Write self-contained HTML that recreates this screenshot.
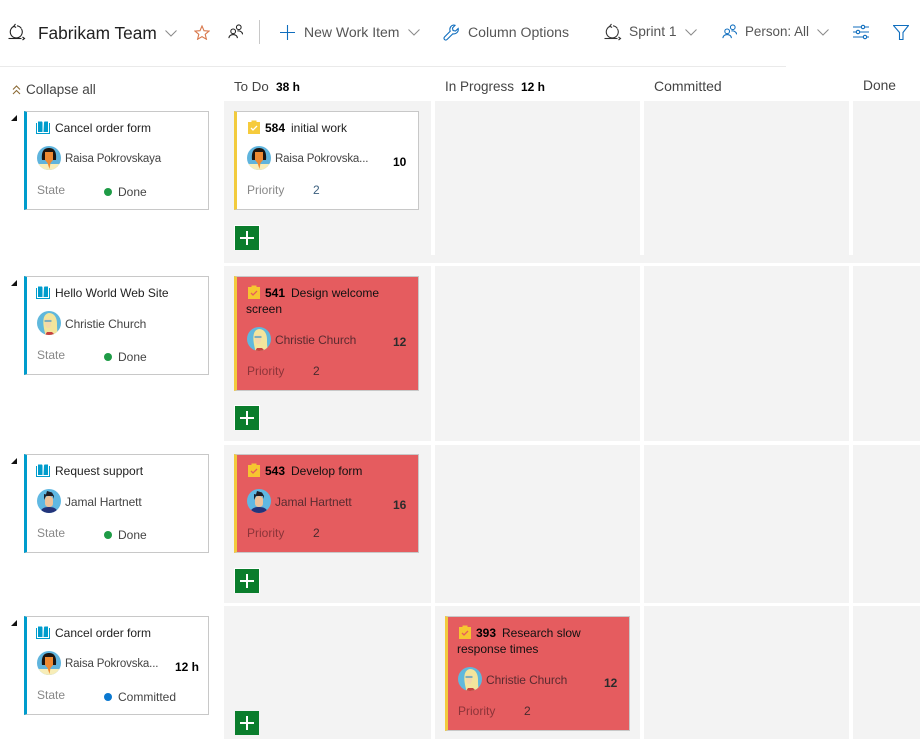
<!DOCTYPE html>
<html lang="en"><head><meta charset="utf-8"><title>Fabrikam Team</title>
<style>
html,body{margin:0;padding:0;background:#fff}
body{width:920px;height:739px;overflow:hidden;position:relative;font-family:"Liberation Sans",sans-serif;font-size:12px;color:#333}
.t{position:absolute;line-height:16px;height:16px;white-space:nowrap}
.a{position:absolute;display:block}
.cell{position:absolute;background:#f3f3f3}
.card{position:absolute;box-sizing:border-box;width:185px;border:1px solid #c8c8c8;border-left:3px solid #009ccc;background:#fff}
.y{border-left-color:#f2cb3d}
.r{background:#e55c5f}
.add{position:absolute;left:235px;width:24px;height:24px;background:#0a7d2c;box-shadow:-1px -1px 0 #fff,1px -1px 0 #fff,-1px 0 0 #fff,1px 0 0 #fff}
.add:before{content:"";position:absolute;left:5px;top:11px;width:14px;height:2px;background:#fff}
.add:after{content:"";position:absolute;left:11px;top:5px;width:2px;height:14px;background:#fff}
.tri{position:absolute;left:11px;width:0;height:0;border-style:solid;border-width:0 0 6px 6px;border-color:transparent transparent #111 transparent}
.dot{position:absolute;width:8px;height:8px;border-radius:50%;background:#1e9b46}
.b{font-weight:bold;color:#000}
.h{font-size:14px;color:#555}
.col{font-size:13.5px;color:#444}
.m{color:#888}
.n{color:#444;font-size:11.5px;letter-spacing:-.14px}
.c{color:#444;letter-spacing:-.1px}
.red .c{color:#5a2b30}
.red .m{color:#8c3439}
</style></head><body>
<svg width="0" height="0" style="position:absolute">
<defs>
<symbol id="book" viewBox="0 0 14 13"><path d="M.5 2v10.500h13V2" fill="none" stroke="#009ccc"/><path d="M2 .5h4l.5 1V11H2zM8 1.500l.5-1h3.500V11H7.500z" fill="#009ccc"/></symbol>
<symbol id="task" viewBox="0 0 12 14"><path d="M0 2h3.500V.5h5V2H12v12H0z" fill="#f6cb3c"/><path d="M3 8l2 2 4-4" fill="none" stroke="#fff" stroke-width="1.300"/></symbol>
<symbol id="taskr" viewBox="0 0 12 14"><path d="M0 2h3.500V.5h5V2H12v12H0z" fill="#f6c630"/><path d="M3 8l2 2 4-4" fill="none" stroke="#e55c5f" stroke-width="1.300"/></symbol>
<symbol id="raisa" viewBox="0 0 24 24"><clipPath id="c1"><circle cx="12" cy="12" r="12"/></clipPath><g clip-path="url(#c1)"><rect width="24" height="24" fill="#5fb4dd"/><rect y="18" width="24" height="6" fill="#f7edb8"/><path d="M5 14C4 4 8 2 12 2s8 2 7 12h-3V8H8v6z" fill="#1b1511"/><path d="M8 6h8v8l-2.500 3-1 6-2-6L8 14z" fill="#ee8a32"/></g></symbol>
<symbol id="christie" viewBox="0 0 24 24"><clipPath id="c2"><circle cx="12" cy="12" r="12"/></clipPath><g clip-path="url(#c2)"><rect width="24" height="24" fill="#60b8dc"/><path d="M8 22C5 10 6 3 12 2c6 0 8 6 8 10 0 4 0 8 1 12H8z" fill="#f3e59c"/><path d="M8 8h6v6l-1.500 3H10l-2-3z" fill="#f4d8a8"/><path d="M7.500 10h7" stroke="#5a9fc0" stroke-width="1.500"/><path d="M8 24l2-3 5 0 3 3z" fill="#c7413f"/></g></symbol>
<symbol id="jamal" viewBox="0 0 24 24"><clipPath id="c3"><circle cx="12" cy="12" r="12"/></clipPath><g clip-path="url(#c3)"><rect width="24" height="24" fill="#60b8e2"/><path d="M3 24c1-5 5-6 9-6s8 1 9 6z" fill="#23347a"/><rect x="8" y="7" width="8" height="11" rx="3.500" fill="#eec29a"/><path d="M7 11V5l2 .5L10 2l5 1.500L17 7v3l-1-3H9z" fill="#1e1e26"/></g></symbol>
<symbol id="people" viewBox="0 0 16 16"><g fill="none" stroke="currentColor" stroke-width="1.100"><circle cx="5.500" cy="7.800" r="2.500"/><path d="M1 15c0-5 9-5 9 0"/><circle cx="11.500" cy="3.500" r="2.500"/><path d="M10 7.500c2.500-.6 5.500 .8 5.500 3.500"/></g></symbol>
<symbol id="sprint" viewBox="0 0 18 18"><g fill="none" stroke="currentColor" stroke-width="1.100"><path d="M6.500 3.200A6 6 0 1 0 13.500 6"/><path d="M9 2.800a6 6 0 0 1 4.400 2.800"/><path d="M.5 15.500h13"/><path d="M7.500 1L5.800 3.200l2.300 1.300"/><path d="M14.500 14l2 1.500-2 1.500"/></g></symbol>
<symbol id="chev" viewBox="0 0 12 7"><path d="M.5 .5L6 6l5.500-5.500" fill="none" stroke="#8a8a8a" stroke-width="1"/></symbol>
</defs></svg>

<!-- toolbar -->
<svg class="a" style="left:8px;top:23px;color:#222" width="18" height="18"><use href="#sprint"/></svg>
<span class="t" style="left:38px;top:25px;font-size:17.300px;color:#222">Fabrikam Team</span>
<svg class="a" style="left:165px;top:30px" width="12" height="7"><use href="#chev"/></svg>
<svg class="a" style="left:194px;top:25px" width="16" height="15" viewBox="0 0 16 15"><path d="M8 1l2 4.700 5 .4-3.800 3.200 1.200 4.900L8 11.600l-4.400 2.600 1.200-4.900L1 6.100l5-.4z" fill="none" stroke="#d8784c" stroke-width="1.100"/></svg>
<svg class="a" style="left:228px;top:24px;color:#222" width="15" height="15"><use href="#people"/></svg>
<div class="a" style="left:259px;top:20px;width:1px;height:24px;background:#c8c8c8"></div>
<svg class="a" style="left:280px;top:25px" width="15" height="15"><path d="M7.500 0v15M0 7.500h15" stroke="#106ebe" stroke-width="1.100"/></svg>
<span class="t h" style="left:304px;top:24px">New Work Item</span>
<svg class="a" style="left:408px;top:29px" width="12" height="7"><use href="#chev"/></svg>
<svg class="a" style="left:443px;top:24px" width="17" height="17" viewBox="0 0 17 17"><path d="M10.500 1a4.500 4.500 0 0 1 1.500 .3L9.500 4l.5 2.500 2.500 .5 2.700-2.500A4.500 4.500 0 0 1 9.800 9.800L4 15.500a1.700 1.700 0 0 1-2.500-2.500L7.200 7.200A4.500 4.500 0 0 1 10.500 1z" fill="none" stroke="#106ebe" stroke-width="1.100"/></svg>
<span class="t h" style="left:468px;top:24px;font-size:14.100px">Column Options</span>
<svg class="a" style="left:604px;top:23px;color:#333" width="18" height="18"><use href="#sprint"/></svg>
<span class="t h" style="left:629px;top:24px;font-size:13.800px">Sprint 1</span>
<svg class="a" style="left:685px;top:29px" width="12" height="7"><use href="#chev"/></svg>
<svg class="a" style="left:722px;top:24px;color:#106ebe" width="15" height="15"><use href="#people"/></svg>
<span class="t h" style="left:745px;top:24px;font-size:13.400px">Person: All</span>
<svg class="a" style="left:817px;top:29px" width="12" height="7"><use href="#chev"/></svg>
<svg class="a" style="left:853px;top:24px" width="16" height="16" viewBox="0 0 16 16"><g fill="#fff" stroke="#106ebe" stroke-width="1.100"><path d="M0 3h16M0 8h16M0 13h16"/><circle cx="10" cy="3" r="1.700"/><circle cx="5" cy="8" r="1.700"/><circle cx="12" cy="13" r="1.700"/></g></svg>
<svg class="a" style="left:893px;top:25px" width="16" height="15" viewBox="0 0 16 15"><path d="M.5 .5h15L10 7.500V14.500H6.500V7.500z" fill="none" stroke="#106ebe" stroke-width="1.100"/></svg>
<div class="a" style="left:0;top:66px;width:786px;height:1px;background:#eaeaea"></div>

<!-- column headers -->
<svg class="a" style="left:12px;top:85px" width="9" height="10" viewBox="0 0 9 10"><path d="M1 4.500L4.500 1 8 4.500M1 9l3.500-3.500L8 9" fill="none" stroke="#8b6a35" stroke-width="1.100"/></svg>
<span class="t col" style="left:26px;top:82px">Collapse all</span>
<span class="t col" style="left:234px;top:79px;font-size:13.300px">To Do</span>
<span class="t b" style="left:276px;top:79px">38 h</span>
<span class="t col" style="left:445px;top:79px">In Progress</span>
<span class="t b" style="left:521px;top:79px">12 h</span>
<span class="t col" style="left:654px;top:78px;font-size:14px">Committed</span>
<span class="t col" style="left:863px;top:78px;font-size:13.800px">Done</span>

<!-- grid -->
<div class="cell" style="left:224px;top:101px;width:696px;height:162px"></div>
<div class="a" style="left:431px;top:101px;width:4px;height:154px;background:#fff"></div>
<div class="a" style="left:640px;top:101px;width:4px;height:154px;background:#fff"></div>
<div class="a" style="left:849px;top:101px;width:4px;height:154px;background:#fff"></div>
<div class="cell" style="left:224px;top:266px;width:207px;height:175px"></div><div class="cell" style="left:435px;top:266px;width:205px;height:175px"></div><div class="cell" style="left:644px;top:266px;width:205px;height:175px"></div><div class="cell" style="left:853px;top:266px;width:67px;height:175px"></div>
<div class="cell" style="left:224px;top:445px;width:207px;height:158px"></div><div class="cell" style="left:435px;top:445px;width:205px;height:158px"></div><div class="cell" style="left:644px;top:445px;width:205px;height:158px"></div><div class="cell" style="left:853px;top:445px;width:67px;height:158px"></div>
<div class="cell" style="left:224px;top:606px;width:207px;height:133px"></div><div class="cell" style="left:435px;top:606px;width:205px;height:133px"></div><div class="cell" style="left:644px;top:606px;width:205px;height:133px"></div><div class="cell" style="left:853px;top:606px;width:67px;height:133px"></div>

<!-- row 1 -->
<div class="tri" style="top:115px"></div>
<div class="card" style="left:24px;top:111px;height:99px"></div>
<svg class="a" style="left:36px;top:121px" width="14" height="13"><use href="#book"/></svg>
<span class="t" style="left:55px;top:120px;color:#222">Cancel order form</span>
<svg class="a" style="left:37px;top:146px" width="24" height="24"><use href="#raisa"/></svg>
<span class="t n" style="left:65px;top:151px">Raisa Pokrovskaya</span>
<span class="t m" style="left:37px;top:182px">State</span>
<div class="dot" style="left:104px;top:188px"></div>
<span class="t" style="left:118px;top:184px;color:#444">Done</span>

<div class="card y" style="left:234px;top:111px;height:99px"></div>
<svg class="a" style="left:248px;top:120px" width="12" height="14"><use href="#task"/></svg>
<span class="t b" style="left:265px;top:120px">584</span>
<span class="t" style="left:291px;top:120px;color:#222">initial work</span>
<svg class="a" style="left:247px;top:146px" width="24" height="24"><use href="#raisa"/></svg>
<span class="t n" style="left:275px;top:151px">Raisa Pokrovska...</span>
<span class="t b" style="left:393px;top:154px">10</span>
<span class="t m" style="left:247px;top:182px">Priority</span>
<span class="t" style="left:313px;top:182px;color:#3b5f7e">2</span>
<div class="add" style="top:226px"></div>

<!-- row 2 -->
<div class="tri" style="top:280px"></div>
<div class="card" style="left:24px;top:276px;height:99px"></div>
<svg class="a" style="left:36px;top:286px" width="14" height="13"><use href="#book"/></svg>
<span class="t" style="left:55px;top:285px;color:#222">Hello World Web Site</span>
<svg class="a" style="left:37px;top:311px" width="24" height="24"><use href="#christie"/></svg>
<span class="t c" style="left:65px;top:316px">Christie Church</span>
<span class="t m" style="left:37px;top:347px">State</span>
<div class="dot" style="left:104px;top:353px"></div>
<span class="t" style="left:118px;top:349px;color:#444">Done</span>

<div class="red">
<div class="card y r" style="left:234px;top:276px;height:115px"></div>
<svg class="a" style="left:248px;top:285px" width="12" height="14"><use href="#taskr"/></svg>
<span class="t b" style="left:265px;top:285px">541</span>
<span class="t" style="left:291px;top:285px;color:#111">Design welcome</span>
<span class="t" style="left:246px;top:301px;color:#111">screen</span>
<svg class="a" style="left:247px;top:327px" width="24" height="24"><use href="#christie"/></svg>
<span class="t c" style="left:275px;top:332px">Christie Church</span>
<span class="t b" style="left:393px;top:334px;color:#2c2c2c">12</span>
<span class="t m" style="left:247px;top:363px">Priority</span>
<span class="t" style="left:313px;top:363px;color:#4a2a2e">2</span>
</div>
<div class="add" style="top:406px"></div>

<!-- row 3 -->
<div class="tri" style="top:458px"></div>
<div class="card" style="left:24px;top:454px;height:99px"></div>
<svg class="a" style="left:36px;top:464px" width="14" height="13"><use href="#book"/></svg>
<span class="t" style="left:55px;top:463px;color:#222">Request support</span>
<svg class="a" style="left:37px;top:489px" width="24" height="24"><use href="#jamal"/></svg>
<span class="t c" style="left:65px;top:494px">Jamal Hartnett</span>
<span class="t m" style="left:37px;top:525px">State</span>
<div class="dot" style="left:104px;top:531px"></div>
<span class="t" style="left:118px;top:527px;color:#444">Done</span>

<div class="red">
<div class="card y r" style="left:234px;top:454px;height:99px"></div>
<svg class="a" style="left:248px;top:463px" width="12" height="14"><use href="#taskr"/></svg>
<span class="t b" style="left:265px;top:463px">543</span>
<span class="t" style="left:291px;top:463px;color:#111">Develop form</span>
<svg class="a" style="left:247px;top:489px" width="24" height="24"><use href="#jamal"/></svg>
<span class="t c" style="left:275px;top:494px">Jamal Hartnett</span>
<span class="t b" style="left:393px;top:497px;color:#2c2c2c">16</span>
<span class="t m" style="left:247px;top:525px">Priority</span>
<span class="t" style="left:313px;top:525px;color:#4a2a2e">2</span>
</div>
<div class="add" style="top:569px"></div>

<!-- row 4 -->
<div class="tri" style="top:620px"></div>
<div class="card" style="left:24px;top:616px;height:99px"></div>
<svg class="a" style="left:36px;top:626px" width="14" height="13"><use href="#book"/></svg>
<span class="t" style="left:55px;top:625px;color:#222">Cancel order form</span>
<svg class="a" style="left:37px;top:651px" width="24" height="24"><use href="#raisa"/></svg>
<span class="t n" style="left:65px;top:656px">Raisa Pokrovska...</span>
<span class="t b" style="left:175px;top:659px">12 h</span>
<span class="t m" style="left:37px;top:687px">State</span>
<div class="dot" style="left:104px;top:693px;background:#0a78d0"></div>
<span class="t" style="left:118px;top:689px;color:#444">Committed</span>
<div class="add" style="top:711px;box-shadow:none"></div>

<div class="red">
<div class="card y r" style="left:445px;top:616px;height:115px"></div>
<svg class="a" style="left:459px;top:625px" width="12" height="14"><use href="#taskr"/></svg>
<span class="t b" style="left:476px;top:625px">393</span>
<span class="t" style="left:502px;top:625px;color:#111">Research slow</span>
<span class="t" style="left:457px;top:641px;color:#111">response times</span>
<svg class="a" style="left:458px;top:667px" width="24" height="24"><use href="#christie"/></svg>
<span class="t c" style="left:486px;top:672px">Christie Church</span>
<span class="t b" style="left:604px;top:675px;color:#2c2c2c">12</span>
<span class="t m" style="left:458px;top:703px">Priority</span>
<span class="t" style="left:524px;top:703px;color:#4a2a2e">2</span>
</div>
</body></html>
